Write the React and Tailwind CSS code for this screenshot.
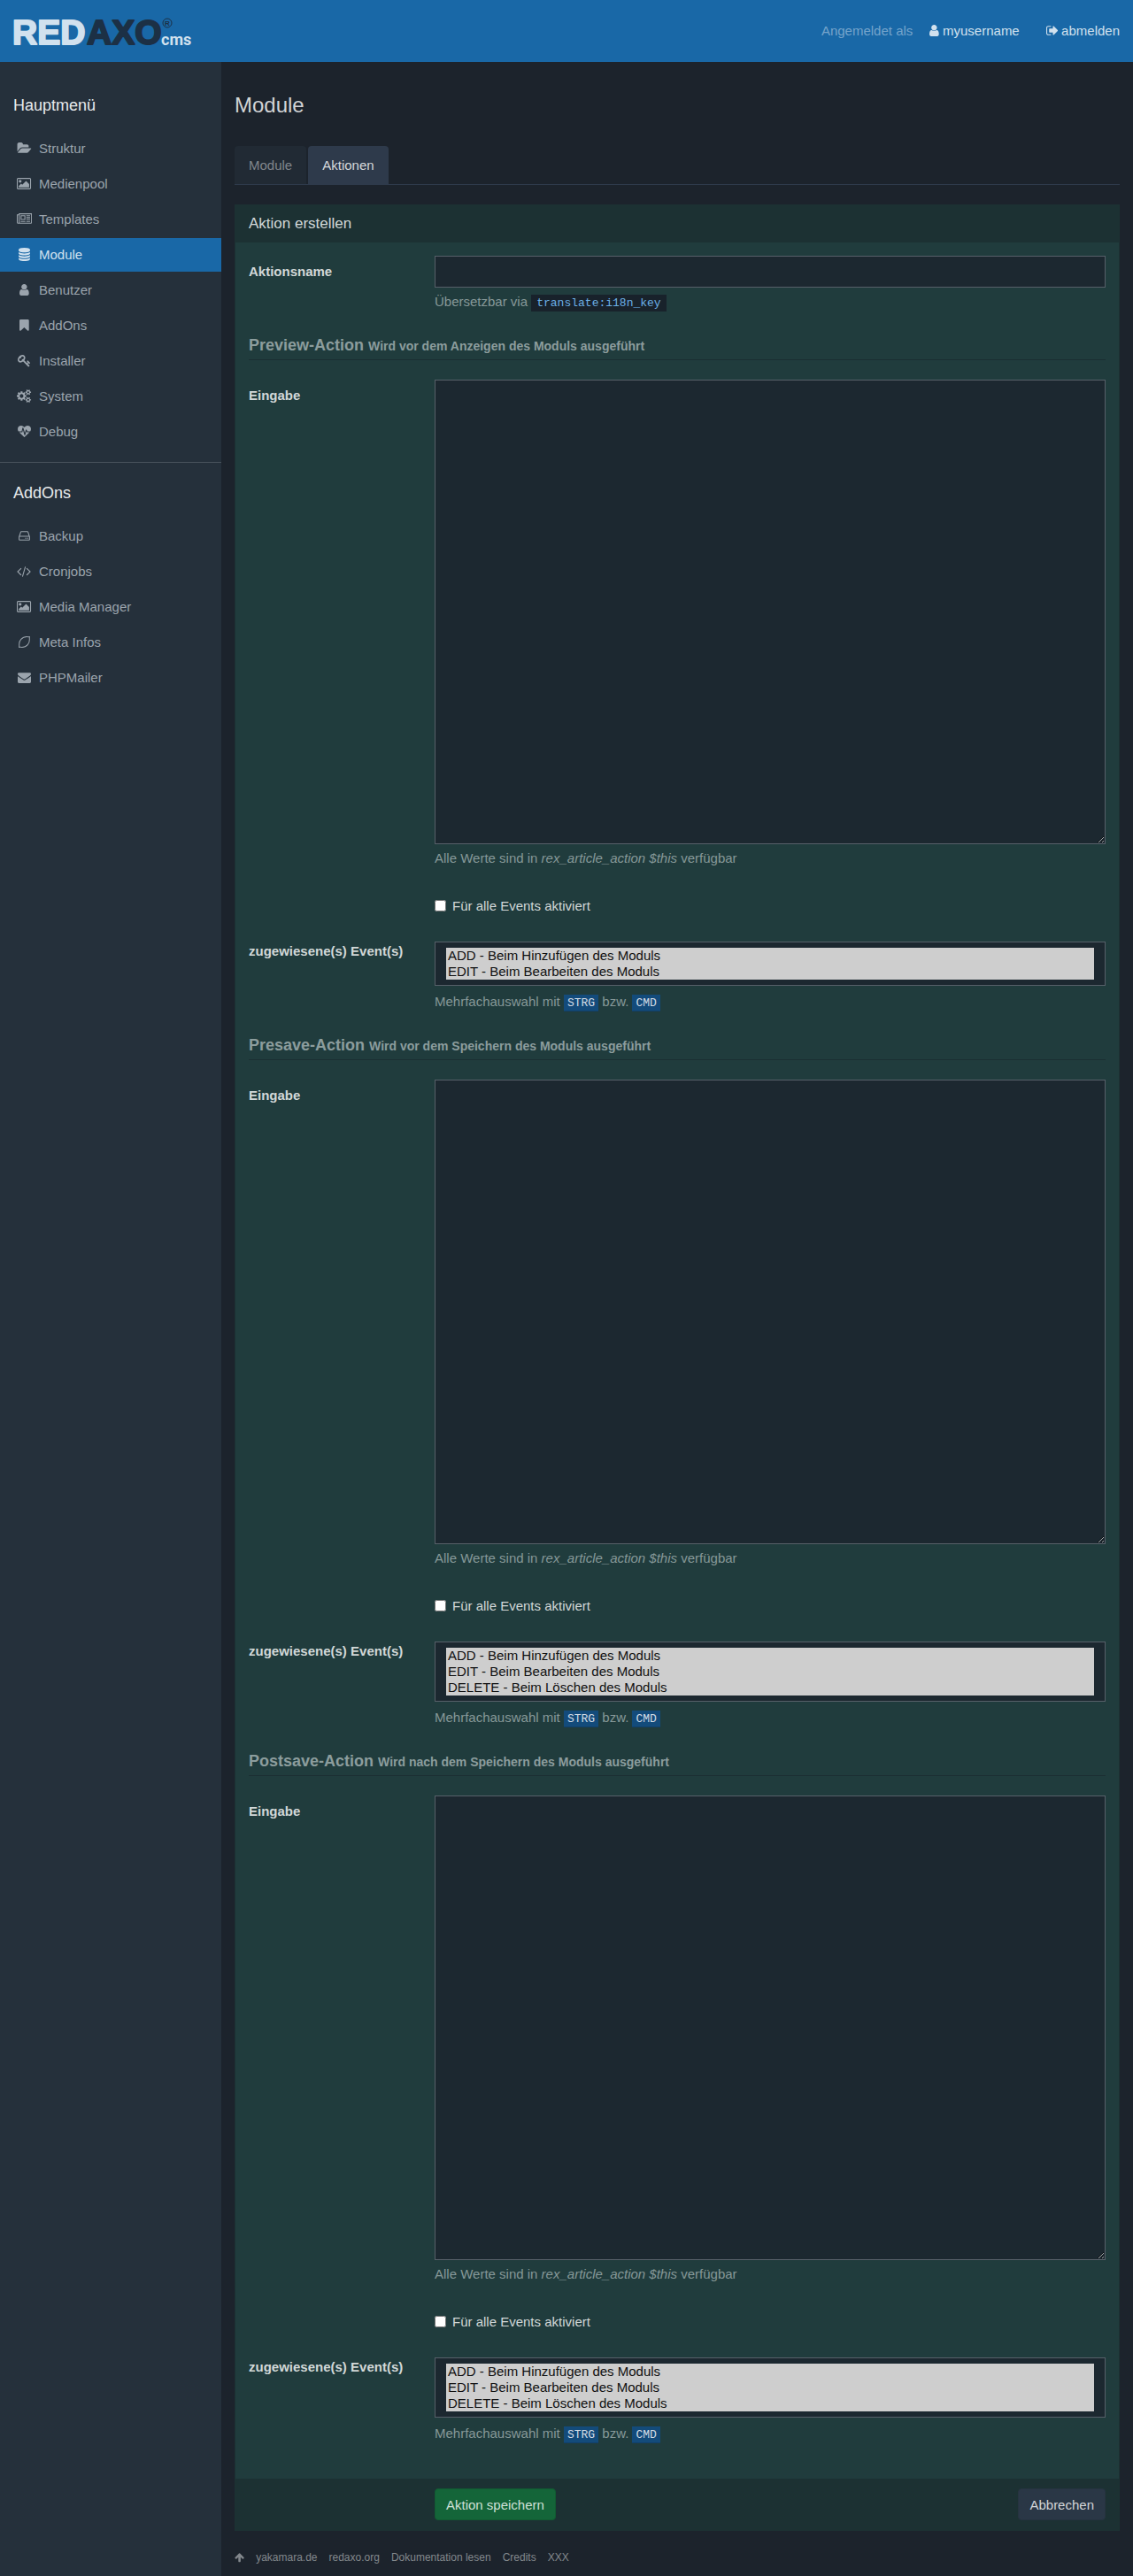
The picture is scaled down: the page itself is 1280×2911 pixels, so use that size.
import React from "react";

const ICONS = {
  user: {
    box: "256 0 1280 1792",
    d: "M1536 1399q0 109-62.5 187t-150.5 78h-854q-88 0-150.5-78t-62.5-187q0-85 8.5-160.5t31.5-152 58.5-131 94-89 134.5-34.5q131 128 313 128t313-128q76 0 134.5 34.5t94 89 58.5 131 31.5 152 8.5 160.5zm-256-887q0 159-112.5 271.5t-271.5 112.5-271.5-112.5-112.5-271.5 112.5-271.5 271.5-112.5 271.5 112.5 112.5 271.5z",
  },
  signOut: {
    box: "64 0 1600 1792",
    d: "M704 1440q0 4 1 20t.5 26.5-3 23.5-10 19.5-20.5 6.5h-320q-119 0-203.5-84.5t-84.5-203.5v-704q0-119 84.5-203.5t203.5-84.5h320q13 0 22.5 9.5t9.5 22.5q0 4 1 20t.5 26.5-3 23.5-10 19.5-20.5 6.5h-320q-66 0-113 47t-47 113v704q0 66 47 113t113 47h312l11.5 1 11.5 3 8 5.5 7 9 2 13.5zm928-544q0 26-19 45l-544 544q-19 19-45 19t-45-19-19-45v-288h-448q-26 0-45-19t-19-45v-384q0-26 19-45t45-19h448v-288q0-26 19-45t45-19 45 19l544 544q19 19 19 45z",
  },
  folder: {
    box: "0 0 1943 1792",
    d: "M1943 952q0 31-31 66l-336 396q-43 51-120.5 86.5t-143.5 35.5h-1088q-34 0-60.5-13t-26.5-43q0-31 31-66l336-396q43-51 120.5-86.5t143.5-35.5h1088q34 0 60.5 13t26.5 43zm-343-344v160h-832q-94 0-197 47.5t-164 119.5l-337 396-5 6q0-4-.5-12.5t-.5-12.5v-960q0-92 66-158t158-66h320q92 0 158 66t66 158v32h544q92 0 158 66t66 158z",
  },
  image: {
    box: "0 0 1920 1792",
    d: "M640 576q0 80-56 136t-136 56-136-56-56-136 56-136 136-56 136 56 56 136zm1024 384v448h-1408v-192l320-320 160 160 512-512zm96-704h-1600q-13 0-22.5 9.5t-9.5 22.5v1216q0 13 9.5 22.5t22.5 9.5h1600q13 0 22.5-9.5t9.5-22.5v-1216q0-13-9.5-22.5t-22.5-9.5zm160 32v1216q0 66-47 113t-113 47h-1600q-66 0-113-47t-47-113v-1216q0-66 47-113t113-47h1600q66 0 113 47t47 113z",
  },
  newspaper: {
    box: "0 0 2048 1792",
    d: "M1024 512h-384v384h384v-384zm128 640v128h-640v-128h640zm0-768v640h-640v-640h640zm640 768v128h-512v-128h512zm0-256v128h-512v-128h512zm0-256v128h-512v-128h512zm0-256v128h-512v-128h512zm-1536 960v-960h-128v960q0 26 19 45t45 19 45-19 19-45zm1664 0v-1088h-1536v1088q0 33-11 64h1483q26 0 45-19t19-45zm128-1216v1216q0 80-56 136t-136 56h-1664q-80 0-136-56t-56-136v-1088h256v-128h1792z",
  },
  database: {
    box: "0 0 1792 1792",
    d: "M896 768q237 0 443-43t325-127v170q0 69-103 128t-280 93.5-385 34.5-385-34.5-280-93.5-103-128v-170q119 84 325 127t443 43zm0 768q237 0 443-43t325-127v170q0 69-103 128t-280 93.5-385 34.5-385-34.5-280-93.5-103-128v-170q119 84 325 127t443 43zm0-384q237 0 443-43t325-127v170q0 69-103 128t-280 93.5-385 34.5-385-34.5-280-93.5-103-128v-170q119 84 325 127t443 43zm0-1152q208 0 385 34.5t280 93.5 103 128v128q0 69-103 128t-280 93.5-385 34.5-385-34.5-280-93.5-103-128v-128q0-69 103-128t280-93.5 385-34.5z",
  },
  bookmark: {
    box: "256 0 1280 1792",
    d: "M1420 128q23 0 44 9 33 13 52.5 41t19.5 62v1289q0 34-19.5 62t-52.5 41q-19 8-44 8-48 0-83-32l-441-424-441 424q-36 33-83 33-23 0-44-9-33-13-52.5-41t-19.5-62v-1289q0-34 19.5-62t52.5-41q21-9 44-9h1048z",
  },
  key: {
    box: "0 0 1792 1792",
    d: "M832 512q0-80-56-136t-136-56-136 56-56 136q0 42 19 83-41-19-83-19-80 0-136 56t-56 136 56 136 136 56 136-56 56-136q0-42-19-83 41 19 83 19 80 0 136-56t56-136zm851 704q0 17-49 66t-66 49q-9 0-28.5-16t-36.5-33-38.5-40-24.5-26l-96 96 220 220q28 28 28 68 0 42-39 81t-81 39q-40 0-68-28l-671-671q-176 131-365 131-163 0-265.5-102.5t-102.5-265.5q0-160 95-313t248-248 313-95q163 0 265.5 102.5t102.5 265.5q0 189-131 365l355 355 96-96q-3-3-26-24.5t-40-38.5-33-36.5-16-28.5q0-17 49-66t66-49q13 0 23 10 6 6 46 44.5t82 79.5 86.5 86 73 78 28.5 41z",
  },
  cogs: {
    box: "0 0 1920 1792",
    d: "M896 896q0-106-75-181t-181-75-181 75-75 181 75 181 181 75 181-75 75-181zm768 512q0-52-38-90t-90-38-90 38-38 90q0 53 37.5 90.5t90.5 37.5 90.5-37.5 37.5-90.5zm0-1024q0-52-38-90t-90-38-90 38-38 90q0 53 37.5 90.5t90.5 37.5 90.5-37.5 37.5-90.5zm-384 421v185q0 10-7 19.5t-16 10.5l-155 24q-11 35-32 76 34 48 90 115 7 11 7 20 0 12-7 19-23 30-82.5 89.5t-78.5 59.5q-11 0-21-7l-115-90q-37 19-77 31-11 108-23 155-7 24-30 24h-186q-11 0-20-7.5t-10-17.5l-23-153q-34-10-75-31l-118 89q-7 7-20 7-11 0-21-8-144-133-144-160 0-9 7-19 10-14 41-53t47-61q-23-44-35-82l-152-24q-10-1-17-9.5t-7-19.5v-185q0-10 7-19.5t16-10.5l155-24q11-35 32-76-34-48-90-115-7-11-7-20 0-12 7-20 22-30 82-89t79-59q11 0 21 7l115 90q34-18 77-32 11-108 23-154 7-24 30-24h186q11 0 20 7.5t10 17.5l23 153q34 10 75 31l118-89q8-7 20-7 11 0 21 8 144 133 144 160 0 8-7 19-12 16-42 54t-45 60q23 48 34 82l152 23q10 2 17 10.5t7 19.5zm640 533v140q0 16-149 31-12 27-30 52 51 113 51 138 0 4-4 7-122 71-124 71-8 0-46-47t-52-68q-20 2-30 2t-30-2q-14 21-52 68t-46 47q-2 0-124-71-4-3-4-7 0-25 51-138-18-25-30-52-149-15-149-31v-140q0-16 149-31 13-29 30-52-51-113-51-138 0-4 4-7 4-2 35-20t59-34 30-16q8 0 46 46.5t52 67.5q20-2 30-2t30 2q51-71 92-112l6-2q4 0 124 70 4 3 4 7 0 25-51 138 17 23 30 52 149 15 149 31zm0-1024v140q0 16-149 31-12 27-30 52 51 113 51 138 0 4-4 7-122 71-124 71-8 0-46-47t-52-68q-20 2-30 2t-30-2q-14 21-52 68t-46 47q-2 0-124-71-4-3-4-7 0-25 51-138-18-25-30-52-149-15-149-31v-140q0-16 149-31 13-29 30-52-51-113-51-138 0-4 4-7 4-2 35-20t59-34 30-16q8 0 46 46.5t52 67.5q20-2 30-2t30 2q51-71 92-112l6-2q4 0 124 70 4 3 4 7 0 25-51 138 17 23 30 52 149 15 149 31z",
  },
  heartbeat: {
    box: "0 0 1792 1792",
    d: "M1280 1024h305q-5 6-10 10.5t-9 7.5l-3 4-623 600q-18 18-44 18t-44-18l-624-602q-5-2-21-20h369q22 0 39.5-13.5t22.5-34.5l70-281 190 667q6 20 23 33t39 13q21 0 38-13t23-33l146-485 56 112q18 35 57 35zm512-428q0 145-103 300h-369l-111-221q-8-17-25.5-27t-36.5-8q-45 5-56 46l-129 430-196-686q-6-20-23.5-33t-39.5-13-39 13.5-22 34.5l-116 464h-423q-103-155-103-300 0-220 127-344t351-124q62 0 126.5 21.5t120 58 95.5 68.5 76 68q36-36 76-68t95.5-68.5 120-58 126.5-21.5q224 0 351 124t127 344z",
  },
  hdd: {
    box: "0 0 1792 1792",
    d: "M1168 1216q0 33-23.5 56.5t-56.5 23.5-56.5-23.5-23.5-56.5 23.5-56.5 56.5-23.5 56.5 23.5 23.5 56.5zm256 0q0 33-23.5 56.5t-56.5 23.5-56.5-23.5-23.5-56.5 23.5-56.5 56.5-23.5 56.5 23.5 23.5 56.5zm112 160v-320q0-13-9.5-22.5t-22.5-9.5h-1216q-13 0-22.5 9.5t-9.5 22.5v320q0 13 9.5 22.5t22.5 9.5h1216q13 0 22.5-9.5t9.5-22.5zm-1230-480h1180l-157-482q-4-13-16-21.5t-26-8.5h-782q-14 0-26 8.5t-16 21.5zm1358 160v320q0 66-47 113t-113 47h-1216q-66 0-113-47t-47-113v-320q0-25 16-75l197-606q17-53 63-86t101-33h782q55 0 101 33t63 86l197 606q16 50 16 75z",
  },
  code: {
    box: "-64 0 1920 1792",
    d: "M553 1399l-50 50q-10 10-23 10t-23-10l-466-466q-10-10-10-23t10-23l466-466q10-10 23-10t23 10l50 50q10 10 10 23t-10 23l-393 393 393 393q10 10 10 23t-10 23zm591-1067l-373 1291q-4 13-15.5 19.5t-23.5 2.5l-62-17q-13-4-19.5-15.5t-2.5-24.5l373-1291q4-13 15.5-19.5t23.5-2.5l62 17q13 4 19.5 15.5t2.5 24.5zm657 651l-466 466q-10 10-23 10t-23-10l-50-50q-10-10-10-23t10-23l393-393-393-393q-10-10-10-23t10-23l50-50q10-10 23-10t23 10l466 466q10 10 10 23t-10 23z",
  },
  lemon: {
    box: "0 0 1792 1792",
    outline: true,
    d: "M1600 190C1500 215 1400 190 1250 190C900 190 640 310 450 520C230 760 190 960 200 1200C205 1330 215 1450 190 1600C330 1580 430 1600 560 1600C900 1600 1130 1510 1340 1270C1540 1040 1600 840 1590 560C1585 430 1575 320 1600 190Z",
  },
  envelope: {
    box: "0 0 1792 1792",
    d: "M1792 710v794q0 66-47 113t-113 47h-1472q-66 0-113-47t-47-113v-794q44 49 101 87 362 246 497 345 57 42 92.5 65.5t94.5 48 110 24.5h2q51 0 110-24.5t94.5-48 92.5-65.5q170-123 498-345 57-39 100-87zm0-294q0 79-49 151t-122 123q-376 261-468 325-10 7-42.5 31t-54 38.5-52 32.5-57.5 27-50 9h-2q-23 0-50-9t-57.5-27-52-32.5-54-38.5-42.5-31q-91-64-262-182.5t-205-142.5q-62-42-117-115.5t-55-136.5q0-78 41.5-130t118.5-52h1472q65 0 112.5 47t47.5 113z",
  },
  arrowUp: {
    box: "64 0 1664 1792",
    d: "M1675 971q0 51-37 90l-75 75q-38 38-91 38-54 0-90-38l-294-293v704q0 52-37.5 84.5t-90.5 32.5h-128q-53 0-90.5-32.5t-37.5-84.5v-704l-294 293q-36 38-90 38t-90-38l-75-75q-38-38-38-90 0-53 38-91l651-651q35-37 90-37 54 0 91 37l651 651q37 39 37 91z",
  },
};

function Icon({ name, className = "h-[15px]" }) {
  const icon = ICONS[name];
  return (
    <svg viewBox={icon.box} className={`${className} w-auto shrink-0`} aria-hidden="true">
      {icon.outline ? (
        <path d={icon.d} fill="none" stroke="currentColor" strokeWidth="120" strokeLinejoin="round" />
      ) : (
        <path d={icon.d} fill="currentColor" />
      )}
    </svg>
  );
}

function Logo() {
  return (
    <svg viewBox="0 -10 202 49" className="h-[49px] w-[202px]" role="img" aria-label="REDAXO cms">
      <g fontFamily="Liberation Sans" fontWeight="700" fontSize="39" strokeWidth="2" strokeLinejoin="round">
        <text x="-1" y="30" fill="#d1e1ee" stroke="#d1e1ee">
          RED
        </text>
        <text x="83" y="30" fill="#1c3045" stroke="#1c3045">
          AXO
        </text>
      </g>
      <text x="167" y="31" fontFamily="Roboto" fontWeight="700" fontSize="18" fill="#d1e1ee">
        cms
      </text>
      <circle cx="174" cy="6" r="5" fill="none" stroke="#1c3045" />
      <text x="171" y="9" fontFamily="Liberation Sans" fontWeight="700" fontSize="8" fill="#1c3045">
        R
      </text>
    </svg>
  );
}

const MAIN_MENU = [
  { icon: "folder", label: "Struktur" },
  { icon: "image", label: "Medienpool" },
  { icon: "newspaper", label: "Templates" },
  { icon: "database", label: "Module", active: true },
  { icon: "user", label: "Benutzer" },
  { icon: "bookmark", label: "AddOns" },
  { icon: "key", label: "Installer" },
  { icon: "cogs", label: "System" },
  { icon: "heartbeat", label: "Debug" },
];

const ADDON_MENU = [
  { icon: "hdd", label: "Backup" },
  { icon: "code", label: "Cronjobs" },
  { icon: "image", label: "Media Manager" },
  { icon: "lemon", label: "Meta Infos" },
  { icon: "envelope", label: "PHPMailer" },
];

function Menu({ title, items }) {
  return (
    <section>
      <h4 className="px-[15px] text-lg leading-6 text-[#e8eaec]">{title}</h4>
      <ul className="mt-[18px] flex flex-col gap-[2px]">
        {items.map((item) => (
          <li key={item.label}>
            <a
              href="#"
              className={
                "flex items-center gap-[7px] px-[18px] pt-2 pb-[9px] " +
                (item.active ? "bg-[#1968a7] text-[#d1e1ee]" : "text-[#9ba4ad]")
              }
            >
              <span className="flex w-[19px] justify-center">
                <Icon name={item.icon} />
              </span>
              {item.label}
            </a>
          </li>
        ))}
      </ul>
    </section>
  );
}

const EVENTS = {
  ADD: "ADD - Beim Hinzufügen des Moduls",
  EDIT: "EDIT - Beim Bearbeiten des Moduls",
  DELETE: "DELETE - Beim Löschen des Moduls",
};

const SECTIONS = [
  {
    id: "preview",
    title: "Preview-Action",
    note: "Wird vor dem Anzeigen des Moduls ausgeführt",
    events: ["ADD", "EDIT"],
  },
  {
    id: "presave",
    title: "Presave-Action",
    note: "Wird vor dem Speichern des Moduls ausgeführt",
    events: ["ADD", "EDIT", "DELETE"],
  },
  {
    id: "postsave",
    title: "Postsave-Action",
    note: "Wird nach dem Speichern des Moduls ausgeführt",
    events: ["ADD", "EDIT", "DELETE"],
  },
];

function Row({ children, className = "" }) {
  return <div className={`grid grid-cols-[210px_1fr] ${className}`}>{children}</div>;
}

function Kbd({ children }) {
  return (
    <kbd className="bg-[#134b7b] px-1 py-[2px] font-['Liberation_Mono',monospace] text-[13px] leading-none text-[#d3dde6] shadow-[inset_0_-1px_0_#113f68]">
      {children}
    </kbd>
  );
}

function ActionSection({ id, title, note, events }) {
  return (
    <fieldset className="mt-[27px]">
      <legend className="mb-[22px] w-full border-b border-[#1b2f33] pb-1 text-lg leading-6 font-bold text-[#8c9d9d]">
        {title} <small className="text-sm leading-none">{note}</small>
      </legend>
      <Row>
        <label htmlFor={`${id}-input`} className="pt-[7px] font-bold">
          Eingabe
        </label>
        <div>
          <textarea
            id={`${id}-input`}
            className="block h-[525px] w-full resize-y border border-[#576069] bg-[#1c2830] px-3 py-[6px]"
          />
          <p className="mt-[5px] text-[#869898]">
            Alle Werte sind in <em>rex_article_action $this</em> verfügbar
          </p>
        </div>
      </Row>
      <Row className="mt-[33px]">
        <label className="col-start-2 flex items-center gap-[7px]">
          <input type="checkbox" className="size-[13px]" />
          Für alle Events aktiviert
        </label>
      </Row>
      <Row className="mt-[30px]">
        <label htmlFor={`${id}-events`} className="font-bold">
          zugewiesene(s) Event(s)
        </label>
        <div>
          <select
            id={`${id}-events`}
            multiple
            size={events.length}
            defaultValue={events}
            className="block w-full border border-[#576069] bg-[#1c2830] px-3 py-[6px] text-[15px]"
          >
            {events.map((event) => (
              <option key={event} value={event} className="px-[2px]">
                {EVENTS[event]}
              </option>
            ))}
          </select>
          <p className="mt-[7px] text-[#869898]">
            Mehrfachauswahl mit <Kbd>STRG</Kbd> bzw. <Kbd>CMD</Kbd>
          </p>
        </div>
      </Row>
    </fieldset>
  );
}

const FOOTER_LINKS = ["yakamara.de", "redaxo.org", "Dokumentation lesen", "Credits", "XXX"];

export default function App() {
  return (
    <div className="flex min-h-screen flex-col bg-[#1c232c] font-['Liberation_Sans',Arial,sans-serif] text-[15px] leading-[21px] text-[#d2d8d8]">
      <header className="flex h-[70px] items-center justify-between bg-[#1968a7] px-[15px] pb-px text-[#d1e1ee]">
        <a href="#">
          <Logo />
        </a>
        <nav className="flex items-center">
          <span className="mr-[19px] text-[#75a4cb]">Angemeldet als</span>
          <a href="#" className="mr-[30px] flex items-center gap-1">
            <Icon name="user" />
            myusername
          </a>
          <a href="#" className="flex items-center gap-1">
            <Icon name="signOut" />
            abmelden
          </a>
        </nav>
      </header>

      <div className="flex grow">
        <aside className="w-[250px] shrink-0 bg-[#25303b] pt-[37px]">
          <Menu title="Hauptmenü" items={MAIN_MENU} />
          <hr className="mt-[15px] mb-[22px] border-[#48525c]" />
          <Menu title="AddOns" items={ADDON_MENU} />
        </aside>

        <div className="min-w-0 grow px-[15px]">
          <h1 className="mt-[35px] text-2xl leading-7 text-[#d2d3d5]">Module</h1>
          <nav className="mt-8 flex gap-[2px] border-b border-[#2e3a4b]">
            <a href="#" className="rounded-t bg-[#212a34] px-4 py-[11px] text-[#80868c]">
              Module
            </a>
            <a href="#" className="rounded-t bg-[#2e3a4b] px-4 py-[11px] text-[#d5d8db]">
              Aktionen
            </a>
          </nav>

          <form className="mt-[22px] border border-[#1c3133] bg-[#203c3d]">
            <h2 className="bg-[#1c3133] px-[15px] py-[9px] text-[17px] leading-6">Aktion erstellen</h2>
            <div className="px-[15px] pt-[15px] pb-[41px]">
              <Row>
                <label htmlFor="action-name" className="pt-[7px] font-bold">
                  Aktionsname
                </label>
                <div>
                  <input
                    id="action-name"
                    type="text"
                    className="block h-9 w-full border border-[#576069] bg-[#1c2830] px-3"
                  />
                  <p className="mt-[5px] text-[#869898]">
                    Übersetzbar via{" "}
                    <code className="bg-[#18222b] px-[6px] py-[2px] font-['Liberation_Mono',monospace] text-[13px] leading-none text-[#6cb0e6]">
                      translate:i18n_key
                    </code>
                  </p>
                </div>
              </Row>
              {SECTIONS.map((section) => (
                <ActionSection key={section.id} {...section} />
              ))}
            </div>
            <div className="flex justify-between bg-[#1c3133] py-[11px] pr-[15px] pl-[225px]">
              <button
                type="button"
                className="h-9 rounded border border-[#115a32] bg-[#146539] px-3 text-[#cfe0d7]"
              >
                Aktion speichern
              </button>
              <button
                type="button"
                className="h-9 rounded border border-[#263340] bg-[#2a3746] px-3 text-[#d2d5d8]"
              >
                Abbrechen
              </button>
            </div>
          </form>

          <footer className="mt-5 mb-3 flex items-center gap-[13px] text-xs leading-5 text-[#83888d]">
            <a href="#" aria-label="Nach oben">
              <Icon name="arrowUp" className="h-3" />
            </a>
            {FOOTER_LINKS.map((label) => (
              <a key={label} href="#">
                {label}
              </a>
            ))}
          </footer>
        </div>
      </div>
    </div>
  );
}
